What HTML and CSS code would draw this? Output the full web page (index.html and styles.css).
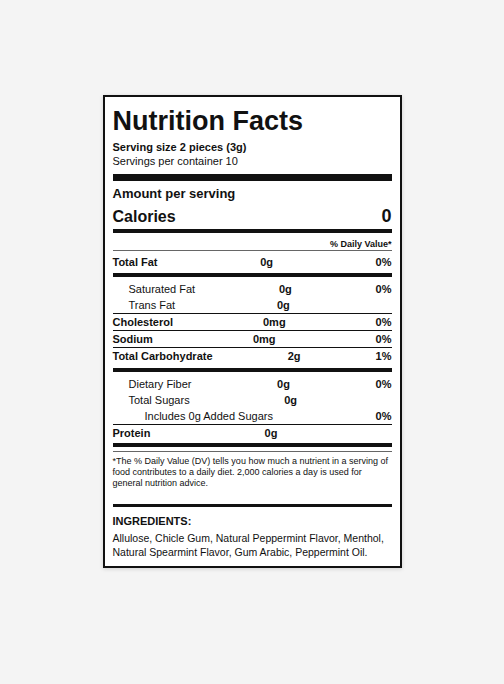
FILE: index.html
```html
<!DOCTYPE html>
<html lang="en">
<head>
    <meta charset="UTF-8">
    <title>Nutrition Facts</title>

    <link rel="stylesheet" href="styles.css">
</head>
<body>
<main class="label">
    <h1 class="title">Nutrition Facts</h1>
    <p class="serving-size">Serving size 2 pieces (3g)</p>
    <p class="servings">Servings per container 10</p>

    <div class="bar bar-lg"></div>

    <p class="amount">Amount per serving</p>
    <div class="calories">
        <span>Calories</span>
        <span class="cal-value">0</span>
    </div>

    <div class="bar bar-md bar-cal"></div>

    <p class="dv-head">% Daily Value*</p>

    <div class="row row-first">
        <span class="name">Total Fat</span><b>0g</b><b>0%</b>
    </div>

    <div class="bar bar-md bar-fat"></div>

    <div class="row sub group-first">
        <span class="name">Saturated Fat</span><b>0g</b><b>0%</b>
    </div>
    <div class="row sub line">
        <span class="name">Trans Fat</span><b>0g</b><b></b>
    </div>
    <div class="row line">
        <span class="name">Cholesterol</span><b>0mg</b><b>0%</b>
    </div>
    <div class="row line">
        <span class="name">Sodium</span><b>0mg</b><b>0%</b>
    </div>
    <div class="row">
        <span class="name">Total Carbohydrate</span><b>2g</b><b>1%</b>
    </div>

    <div class="bar bar-md bar-carb"></div>

    <div class="row sub group-first">
        <span class="name">Dietary Fiber</span><b>0g</b><b>0%</b>
    </div>
    <div class="row sub">
        <span class="name">Total Sugars</span><b>0g</b><b></b>
    </div>
    <div class="row subsub line">
        <span class="name">Includes 0g Added Sugars</span><b></b><b>0%</b>
    </div>
    <div class="row">
        <span class="name">Protein</span><b>0g</b><b></b>
    </div>

    <div class="bar bar-md bar-protein"></div>
    <div class="thin"></div>

    <p class="footnote">*The % Daily Value (DV) tells you how much a nutrient in a serving of food contributes to a daily diet. 2,000 calories a day is used for general nutrition advice.</p>

    <div class="bar bar-sm"></div>

    <h2 class="ingredients-head">INGREDIENTS:</h2>
    <p class="ingredients">Allulose, Chicle Gum, Natural Peppermint Flavor, Menthol, Natural Spearmint Flavor, Gum Arabic, Peppermint Oil.</p>
</main>
</body>
</html>
```

FILE: styles.css
```css
body {
    margin: 0;
    min-height: 100vh;
    background-color: #f4f4f4;
    font-family: "Liberation Sans", Arial, sans-serif;
    color: #111;
}

.label {
    width: 299px;
    box-sizing: border-box;
    margin: 95px auto 0;
    padding: 9px 8px 7px;
    background-color: white;
    border: 2px solid #111;
    box-shadow: 0 1px 4px rgba(0, 0, 0, 0.15);
}

.label p,
.label h1,
.label h2 {
    margin: 0;
}

.title {
    font-size: 27px;
    line-height: 30px;
    font-weight: bold;
}

.serving-size {
    margin-top: 4px !important;
    font-size: 11px;
    line-height: 14px;
    font-weight: bold;
}

.servings {
    font-size: 11px;
    line-height: 14px;
}

/* black rules */
.bar {
    background-color: #111;
}

.bar-lg {
    height: 7px;
    margin-top: 6px;
}

.bar-md {
    height: 4px;
}

.bar-sm {
    height: 3px;
    margin-top: 15px;
}

.bar-cal {
    margin-top: 2px;
}

.bar-fat {
    margin-top: 3px;
}

.bar-carb {
    margin-top: 4px;
}

.bar-protein {
    margin-top: 2px;
}

.thin {
    height: 1px;
    margin-top: 4px;
    background-color: #666;
}

.amount {
    margin-top: 5px !important;
    font-size: 13px;
    line-height: 16px;
    font-weight: bold;
}

.calories {
    display: flex;
    justify-content: space-between;
    align-items: baseline;
    margin-top: 4px;
    font-size: 16px;
    line-height: 20px;
    font-weight: bold;
}

.cal-value {
    font-size: 18px;
}

.dv-head {
    margin-top: 5px !important;
    font-size: 9px;
    line-height: 12px;
    font-weight: bold;
    text-align: right;
    border-bottom: 1px solid #666;
}

/* nutrient rows */
.row {
    display: flex;
    justify-content: space-between;
    font-size: 11px;
    line-height: 16px;
}

.row .name {
    font-weight: bold;
}

.row b {
    font-weight: bold;
}

.row.sub {
    padding-left: 16px;
}

.row.subsub {
    padding-left: 32px;
}

.row.sub .name,
.row.subsub .name {
    font-weight: normal;
}

.row.line {
    border-bottom: 1px solid #111;
}

.row-first {
    padding-top: 3px;
}

.group-first {
    margin-top: 4px;
}

.footnote {
    margin-top: 4px !important;
    font-size: 9px;
    line-height: 11px;
}

.ingredients-head {
    margin-top: 7px !important;
    font-size: 11px;
    line-height: 14px;
    font-weight: bold;
}

.ingredients {
    margin-top: 3px !important;
    font-size: 10.5px;
    line-height: 14px;
}
```
